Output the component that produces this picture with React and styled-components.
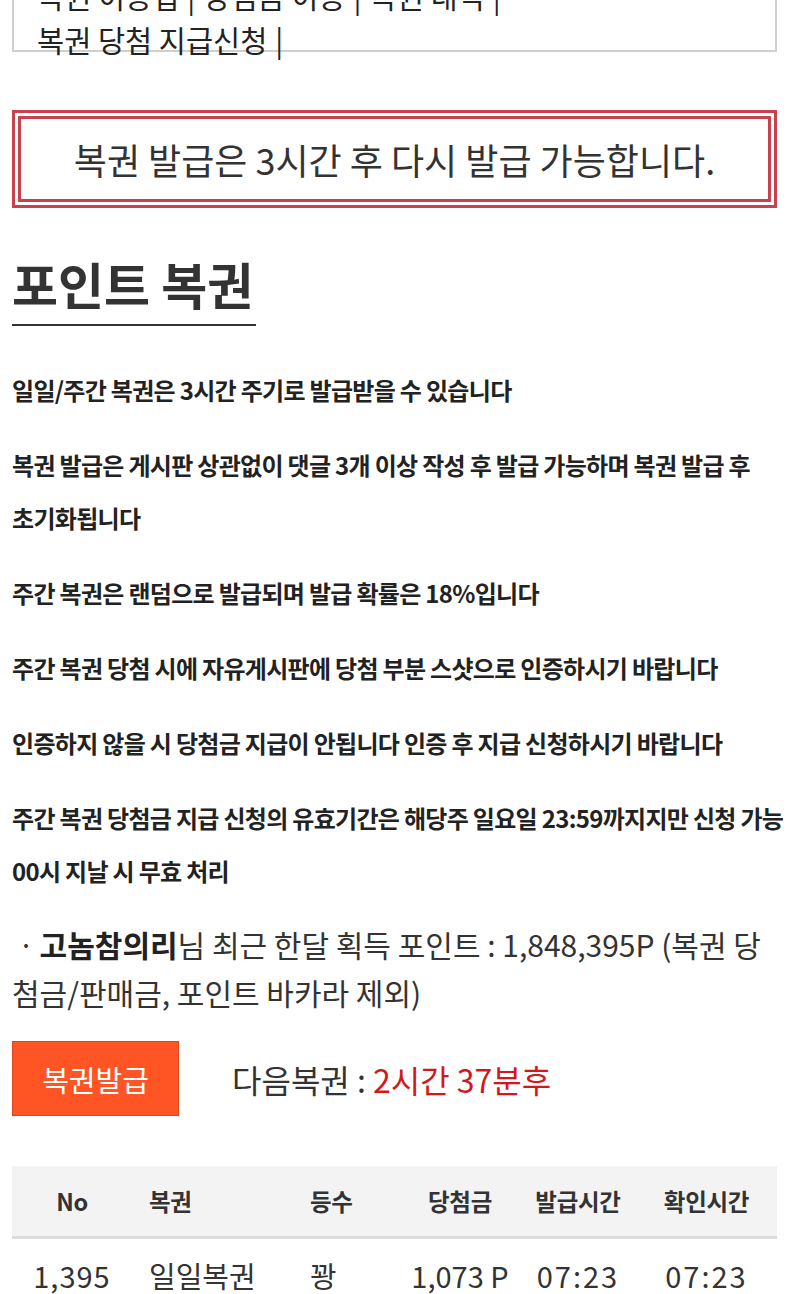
import React from "react";
import styled, { createGlobalStyle } from "styled-components";

const GlobalStyle = createGlobalStyle`
  html, body {
    margin: 0;
    padding: 0;
    background: #ffffff;
  }
  body {
    font-family: "Noto Sans CJK KR", "Noto Sans", sans-serif;
    color: #333333;
    overflow-x: hidden;
  }
  * { box-sizing: border-box; }
`;

const Page = styled.div`
  width: 765px;
  margin-left: 12px;
`;

const NavBox = styled.nav`
  margin-top: -33px;
  height: 85px;
  border: 2px solid #cfcfcf;
  padding: 4px 0 0 23px;
`;

const NavLine = styled.div`
  font-size: 29.5px;
  line-height: 44px;
  color: #222222;
  white-space: nowrap;
`;

const NavLink = styled.a`
  color: inherit;
  text-decoration: none;
`;

const Sep = styled.span`
  margin: 0 8px;
  color: #222222;
`;

const Notice = styled.div`
  margin-top: 58px;
  border: 3px solid #c8414e;
  padding: 3px;
`;

const NoticeInner = styled.div`
  border: 3px solid #c8414e;
  height: 86px;
  display: flex;
  align-items: center;
  justify-content: center;
  font-size: 36px;
  color: #333333;
`;

const TitleWrap = styled.div`
  margin-top: 45px;
`;

const Title = styled.h2`
  display: inline-block;
  margin: 0;
  font-size: 50px;
  font-weight: 700;
  line-height: 60px;
  color: #333333;
  padding: 0 3px 11px 0;
  border-bottom: 2px solid #333333;
`;

const Rules = styled.div`
  margin-top: 37px;
  display: flex;
  flex-direction: column;
  gap: 22px;
`;

const Rule = styled.p`
  margin: 0;
  font-size: 24px;
  font-weight: 700;
  line-height: 53px;
  letter-spacing: -0.7px;
  color: #222222;
  white-space: nowrap;
`;

const PointInfo = styled.p`
  margin: 23px 0 0;
  font-size: 30px;
  line-height: 48px;
  color: #333333;
  white-space: nowrap;
`;

const Nick = styled.b`
  font-weight: 700;
  color: #222222;
`;

const IssueRow = styled.div`
  margin-top: 25px;
  display: flex;
  align-items: center;
  gap: 53px;
`;

const IssueButton = styled.button`
  width: 167px;
  height: 75px;
  background: #ff5423;
  border: 1px solid #d9471d;
  color: #ffffff;
  font-family: inherit;
  font-size: 29px;
  padding: 0;
  cursor: pointer;
`;

const NextInfo = styled.div`
  font-size: 32px;
  color: #333333;
`;

const Remain = styled.span`
  color: #d21818;
`;

const Table = styled.table`
  margin-top: 50px;
  width: 765px;
  border-collapse: collapse;
  table-layout: fixed;
`;

const Th = styled.th`
  height: 71px;
  background: #f3f3f3;
  border-bottom: 3px solid #dcdcdc;
  font-size: 23.5px;
  font-weight: 700;
  color: #333333;
  letter-spacing: -0.3px;
  text-align: ${(p) => p.$align || "left"};
  padding: 0 0 0 ${(p) => p.$pad || 0}px;
  vertical-align: middle;
`;

const Td = styled.td`
  font-size: 29px;
  line-height: 44px;
  color: #333333;
  text-align: ${(p) => p.$align || "left"};
  letter-spacing: ${(p) => p.$spacing || 0}px;
  padding: 14px 0 0 ${(p) => p.$pad || 0}px;
  white-space: nowrap;
`;

const columns = [
  { key: "no", label: "No", width: 120, align: "center", spacing: 1 },
  { key: "name", label: "복권", width: 178, align: "left", pad: 17 },
  { key: "rank", label: "등수", width: 90, align: "left", pad: 0 },
  { key: "prize", label: "당첨금", width: 120, align: "center" },
  { key: "issued", label: "발급시간", width: 116, align: "center", spacing: 2 },
  { key: "checked", label: "확인시간", width: 141, align: "center", spacing: 2 },
];

const rows = [
  { no: "1,395", name: "일일복권", rank: "꽝", prize: "1,073 P", issued: "07:23", checked: "07:23" },
];

const navLines = [
  ["복권 이용법", "당첨금 이용", "복권 내역"],
  ["복권 당첨 지급신청"],
];

const rules = [
  ["일일/주간 복권은 3시간 주기로 발급받을 수 있습니다"],
  ["복권 발급은 게시판 상관없이 댓글 3개 이상 작성 후 발급 가능하며 복권 발급 후", "초기화됩니다"],
  ["주간 복권은 랜덤으로 발급되며 발급 확률은 18%입니다"],
  ["주간 복권 당첨 시에 자유게시판에 당첨 부분 스샷으로 인증하시기 바랍니다"],
  ["인증하지 않을 시 당첨금 지급이 안됩니다 인증 후 지급 신청하시기 바랍니다"],
  ["주간 복권 당첨금 지급 신청의 유효기간은 해당주 일요일 23:59까지지만 신청 가능", "00시 지날 시 무효 처리"],
];

export default function App() {
  return (
    <>
      <GlobalStyle />
      <Page>
        <NavBox>
          {navLines.map((line, i) => (
            <NavLine key={i}>
              {line.map((item) => (
                <React.Fragment key={item}>
                  <NavLink href="#">{item}</NavLink>
                  <Sep>|</Sep>
                </React.Fragment>
              ))}
            </NavLine>
          ))}
        </NavBox>

        <Notice>
          <NoticeInner>복권 발급은 3시간 후 다시 발급 가능합니다.</NoticeInner>
        </Notice>

        <TitleWrap>
          <Title>포인트 복권</Title>
        </TitleWrap>

        <Rules>
          {rules.map((lines, i) => (
            <Rule key={i}>
              {lines.map((l, j) => (
                <React.Fragment key={j}>
                  {j > 0 && <br />}
                  {l}
                </React.Fragment>
              ))}
            </Rule>
          ))}
        </Rules>

        <PointInfo>
          ㆍ<Nick>고놈참의리</Nick>님 최근 한달 획득 포인트 : 1,848,395P (복권 당
          <br />
          첨금/판매금, 포인트 바카라 제외)
        </PointInfo>

        <IssueRow>
          <IssueButton>복권발급</IssueButton>
          <NextInfo>
            다음복권 : <Remain>2시간 37분후</Remain>
          </NextInfo>
        </IssueRow>

        <Table>
          <colgroup>
            {columns.map((c) => (
              <col key={c.key} style={{ width: c.width }} />
            ))}
          </colgroup>
          <thead>
            <tr>
              {columns.map((c) => (
                <Th key={c.key} $align={c.align} $pad={c.pad}>
                  {c.label}
                </Th>
              ))}
            </tr>
          </thead>
          <tbody>
            {rows.map((r) => (
              <tr key={r.no}>
                {columns.map((c) => (
                  <Td key={c.key} $align={c.align} $pad={c.pad} $spacing={c.spacing}>
                    {r[c.key]}
                  </Td>
                ))}
              </tr>
            ))}
          </tbody>
        </Table>
      </Page>
    </>
  );
}
